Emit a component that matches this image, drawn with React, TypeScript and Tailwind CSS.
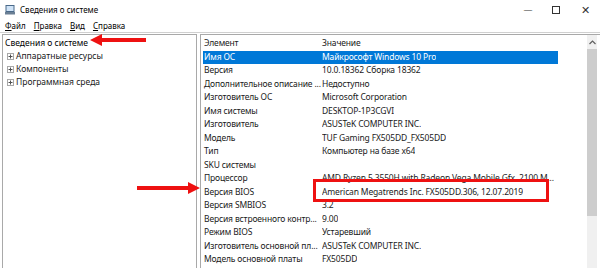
import React from 'react';

const rows: [string, string][] = [
  ['Имя ОС', 'Майкрософт Windows 10 Pro'],
  ['Версия', '10.0.18362 Сборка 18362'],
  ['Дополнительное описание ...', 'Недоступно'],
  ['Изготовитель ОС', 'Microsoft Corporation'],
  ['Имя системы', 'DESKTOP-1P3CGVI'],
  ['Изготовитель', 'ASUSTeK COMPUTER INC.'],
  ['Модель', 'TUF Gaming FX505DD_FX505DD'],
  ['Тип', 'Компьютер на базе x64'],
  ['SKU системы', ''],
  ['Процессор', 'AMD Ryzen 5 3550H with Radeon Vega Mobile Gfx, 2100 M...'],
  ['Версия BIOS', 'American Megatrends Inc. FX505DD.306, 12.07.2019'],
  ['Версия SMBIOS', '3.2'],
  ['Версия встроенного контр...', '9.00'],
  ['Режим BIOS', 'Устаревший'],
  ['Изготовитель основной пл...', 'ASUSTeK COMPUTER INC.'],
  ['Модель основной платы', 'FX505DD'],
];

const Expander = () => (
  <svg width="7" height="7" viewBox="0 0 7 7" className="mr-[2px] shrink-0">
    <rect x="0.5" y="0.5" width="6" height="6" fill="#fff" stroke="#a8a8a8" />
    <path d="M1.5 3.5h4M3.5 1.5v4" stroke="#505050" strokeWidth="1" />
  </svg>
);

const App: React.FC = () => {
  return (
    <div
      className="relative w-[600px] h-[268px] bg-white overflow-hidden text-[8.5px] text-[#1a1a1a] flex flex-col"
      style={{ fontFamily: '"Noto Sans", "Open Sans", sans-serif' }}
    >
      {/* title bar */}
      <div className="h-[19px] flex items-center shrink-0">
        <svg width="11" height="10" viewBox="0 0 11 10" className="ml-[5px] mr-[4px]">
          <rect x="1" y="0.5" width="8" height="6" fill="#cfe3f7" stroke="#4a6a8a" />
          <rect x="0" y="7" width="10" height="2.5" fill="#6a7f94" />
        </svg>
        <span className="text-[8px] text-black">Сведения о системе</span>
        <div className="ml-auto flex items-center text-[#333]">
          <span className="w-[28px] text-center text-[9px]">—</span>
          <span className="w-[28px] flex justify-center">
            <span className="w-[8px] h-[8px] border border-[#333]"></span>
          </span>
          <span className="w-[30px] text-center text-[11px] leading-none">✕</span>
        </div>
      </div>

      {/* menu bar */}
      <div className="h-[13px] flex items-center gap-[8px] pl-[5px] shrink-0 text-black text-[8px]">
        <span><u>Ф</u>айл</span>
        <span><u>П</u>равка</span>
        <span><u>В</u>ид</span>
        <span><u>С</u>правка</span>
      </div>

      {/* body */}
      <div className="flex-1 flex border-t border-[#d0d0d0] pt-px gap-[3px] pl-[2px] min-h-0">
        <div className="w-[195px] shrink-0 border border-[#a9a9a9] border-b-0 pt-[2px]">
          <div className="h-[13px] flex items-center pl-[2px] text-black">Сведения о системе</div>
          {['Аппаратные ресурсы', 'Компоненты', 'Программная среда'].map(t => (
            <div key={t} className="h-[13px] flex items-center pl-[4px]">
              <Expander />
              <span>{t}</span>
            </div>
          ))}
        </div>

        <div className="flex-1 min-w-0 flex border border-[#a9a9a9] border-b-0 border-r-0">
          <div className="flex-1 min-w-0 pt-[2px] pl-[2px] pr-[29px] overflow-hidden tracking-[-0.15px]">
            <div className="h-[13.5px] flex items-center whitespace-nowrap">
              <span className="w-[119px] pl-[1px] shrink-0">Элемент</span>
              <span>Значение</span>
            </div>
            {rows.map(([k, v], i) => (
              <div
                key={k}
                className={`h-[13.5px] flex items-center whitespace-nowrap ${i === 0 ? 'bg-[#0078d7] text-white' : ''}`}
              >
                <span className="w-[119px] pl-[1px] pr-[3px] shrink-0 overflow-hidden">{k}</span>
                <span className="overflow-hidden">{v}</span>
              </div>
            ))}
          </div>
          <div className="w-[10px] mr-[3px] bg-[#f0f0f0] flex flex-col shrink-0">
            <div className="h-[14px] flex items-center justify-center">
              <svg width="7" height="5" viewBox="0 0 7 5">
                <path d="M0.5 4L3.5 1l3 3" fill="none" stroke="#606060" strokeWidth="1.2" />
              </svg>
            </div>
            <div className="h-[167px] bg-[#cdcdcd]"></div>
          </div>
        </div>
      </div>

      {/* annotations */}
      <svg className="absolute left-[88px] top-[33px]" width="60" height="14" viewBox="0 0 60 14">
        <path d="M2 7L14 1v4h44v4H14v4z" fill="#ee1111" />
      </svg>
      <svg className="absolute left-[136px] top-[181px]" width="66" height="14" viewBox="0 0 66 14">
        <path d="M64 7L52 1v4H1v4h51v4z" fill="#ee1111" />
      </svg>
      <div className="absolute left-[313px] top-[179px] w-[236px] h-[23px] border-[3px] border-[#ee1111]"></div>
    </div>
  );
};

export default App;
